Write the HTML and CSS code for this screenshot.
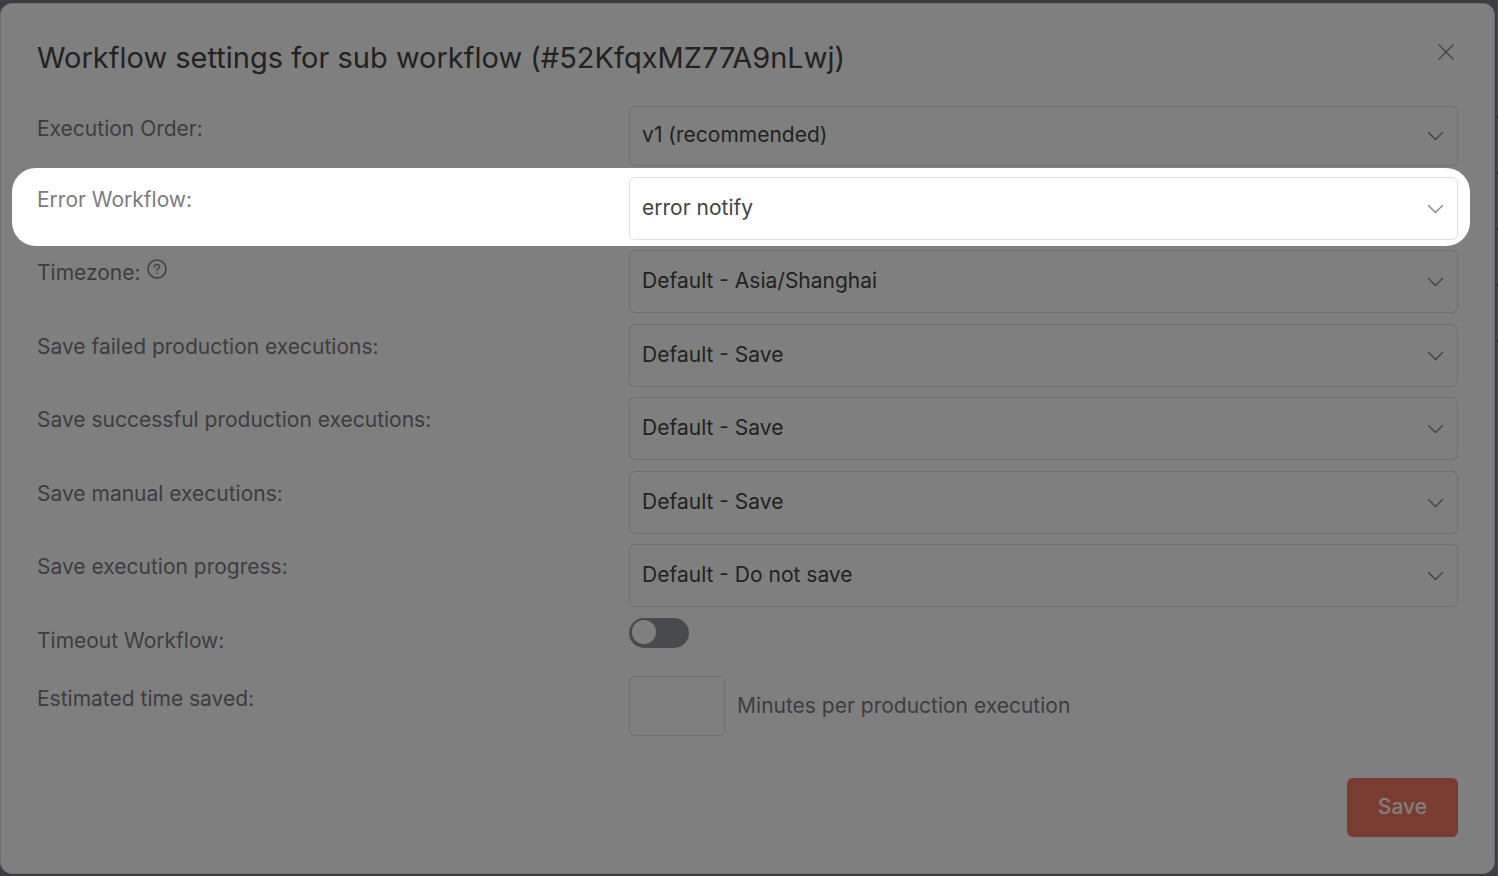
FILE: index.html
```html
<!DOCTYPE html>
<html lang="en">
<head>
<meta charset="utf-8">
<title>Workflow settings</title>
<link rel="stylesheet" href="styles.css">
</head>
<body>
<main class="dialog" role="dialog" aria-labelledby="title">
  <header class="header">
    <h1 class="title" id="title">Workflow settings for sub workflow (#52KfqxMZ77A9nLwj)</h1>
    <button class="close" type="button" aria-label="Close">
      <svg viewBox="0 0 16 16" width="16" height="16"><path d="M1 1l14 14M15 1L1 15"/></svg>
    </button>
  </header>
  <form class="form">
    <div class="row">
      <label class="label" for="order">Execution Order:</label>
      <div class="field"><select class="select compact" id="order"><option>v1 (recommended)</option></select><svg class="chevron" viewBox="0 0 16 10" width="16" height="10"><path d="M.5 1.5l7 7 7-7"/></svg></div>
    </div>
    <div class="row spotlight">
      <label class="label" for="error">Error Workflow:</label>
      <div class="field"><select class="select" id="error"><option>error notify</option></select><svg class="chevron" viewBox="0 0 16 10" width="16" height="10"><path d="M.5 1.5l7 7 7-7"/></svg></div>
    </div>
    <div class="row">
      <div class="label-group">
        <label class="label" for="zone">Timezone:</label>
        <svg class="help" viewBox="0 0 20 20" width="20" height="20"><circle cx="10" cy="10" r="9"/><path d="M7.4 7.9c0-1.5 1.2-2.4 2.6-2.4s2.6.9 2.6 2.2c0 1.7-2.5 1.7-2.6 3.5"/><path d="M10 14.2v.3"/></svg>
      </div>
      <div class="field"><select class="select" id="zone"><option>Default - Asia/Shanghai</option></select><svg class="chevron" viewBox="0 0 16 10" width="16" height="10"><path d="M.5 1.5l7 7 7-7"/></svg></div>
    </div>
    <div class="row">
      <label class="label" for="failed">Save failed production executions:</label>
      <div class="field"><select class="select" id="failed"><option>Default - Save</option></select><svg class="chevron" viewBox="0 0 16 10" width="16" height="10"><path d="M.5 1.5l7 7 7-7"/></svg></div>
    </div>
    <div class="row">
      <label class="label" for="success">Save successful production executions:</label>
      <div class="field"><select class="select" id="success"><option>Default - Save</option></select><svg class="chevron" viewBox="0 0 16 10" width="16" height="10"><path d="M.5 1.5l7 7 7-7"/></svg></div>
    </div>
    <div class="row">
      <label class="label" for="manual">Save manual executions:</label>
      <div class="field"><select class="select" id="manual"><option>Default - Save</option></select><svg class="chevron" viewBox="0 0 16 10" width="16" height="10"><path d="M.5 1.5l7 7 7-7"/></svg></div>
    </div>
    <div class="row">
      <label class="label" for="progress">Save execution progress:</label>
      <div class="field"><select class="select" id="progress"><option>Default - Do not save</option></select><svg class="chevron" viewBox="0 0 16 10" width="16" height="10"><path d="M.5 1.5l7 7 7-7"/></svg></div>
    </div>
    <div class="row">
      <label class="label" for="timeout">Timeout Workflow:</label>
      <input class="switch" type="checkbox" id="timeout">
    </div>
    <div class="row">
      <label class="label" for="saved">Estimated time saved:</label>
      <div class="minutes"><input class="number" type="text" inputmode="numeric" id="saved"><span>Minutes per production execution</span></div>
    </div>
    <footer class="footer"><button class="save" type="button">Save</button></footer>
  </form>
</main>
</body>
</html>
```
FILE: styles.css
```css
* { box-sizing: border-box; }

/* A sliver of the canvas shows at the right edge, behind the dialog */
body {
  margin: 0;
  min-height: 100vh;
  padding: 3px 3px 2px 0;
  background:
    repeating-linear-gradient(#77757f 0 4px, #a5a3ae 4px 56px) right 115px / 1px 228px no-repeat,
    linear-gradient(#a5a3ae, #a5a3ae) right top / 1px 100% no-repeat,
    #7b7984;
  color: #7a7b82;
  font: 400 21px/30px Inter, sans-serif;
}

.dialog {
  min-height: calc(100vh - 5px);
  padding: 34px 36px 36px;
  border: 1px solid #dbdfe7;
  border-radius: 12px;
  background: #fff;
}

.header {
  display: flex;
  justify-content: space-between;
  align-items: flex-start;
  padding-bottom: 28px;
}

.title {
  margin: 0;
  color: #444;
  font-size: 29px;
  font-weight: 400;
  line-height: 40px;
}

.close {
  display: flex;
  padding: 6px 4px;
  border: 0;
  background: none;
}

svg {
  fill: none;
  stroke: #85868c;
  stroke-width: 1.4;
  stroke-linecap: round;
}

.row {
  display: grid;
  grid-template-columns: 5fr 7fr;
  align-items: start;
  padding-bottom: 10px;
}

.row:nth-child(odd) { padding-bottom: 11px; }

.label { padding-top: 8px; }

.label-group {
  display: flex;
  gap: 6px;
}

.help {
  margin-top: 9px;
  stroke-width: 1.6;
}

.field {
  display: grid;
  align-items: center;
}

.field > * { grid-area: 1 / 1; }

.select {
  width: 100%;
  height: 63px;
  padding: 0 40px 1px 12px;
  border: 1px solid #dbdfe7;
  border-radius: 6px;
  appearance: none;
  background: #fff;
  color: #444;
  font: inherit;
}

.compact {
  height: 60px;
  padding-bottom: 2px;
}

.chevron {
  justify-self: end;
  margin-right: 14px;
  pointer-events: none;
}

/* Highlights one setting and dims the rest of the window */
.spotlight { position: relative; }

.spotlight::after {
  content: "";
  position: absolute;
  z-index: 1;
  inset: -9px -12px 4px -25px;
  border-radius: 24px;
  box-shadow: 0 0 0 200vmax rgba(0, 0, 0, 0.5);
  pointer-events: none;
}

.switch {
  width: 60px;
  height: 30px;
  margin: 0 0 18px;
  padding: 2px 3px;
  border-radius: 15px;
  appearance: none;
  background: #92949c;
}

.switch::before {
  content: "";
  display: block;
  width: 24px;
  height: 24px;
  border-radius: 50%;
  background: #fff;
}

.minutes {
  display: flex;
  align-items: center;
  gap: 12px;
}

.number {
  width: 96px;
  height: 60px;
  padding: 0 12px;
  border: 1px solid #dbdfe7;
  border-radius: 6px;
  background: #fff;
  color: #444;
  font: inherit;
}

.footer {
  display: flex;
  justify-content: flex-end;
  padding-top: 31px;
}

.save {
  height: 59px;
  padding: 0 31px 1px;
  border: 0;
  border-radius: 6px;
  background: #f17a61;
  color: #fff;
  font: inherit;
  font-weight: 500;
}
```
